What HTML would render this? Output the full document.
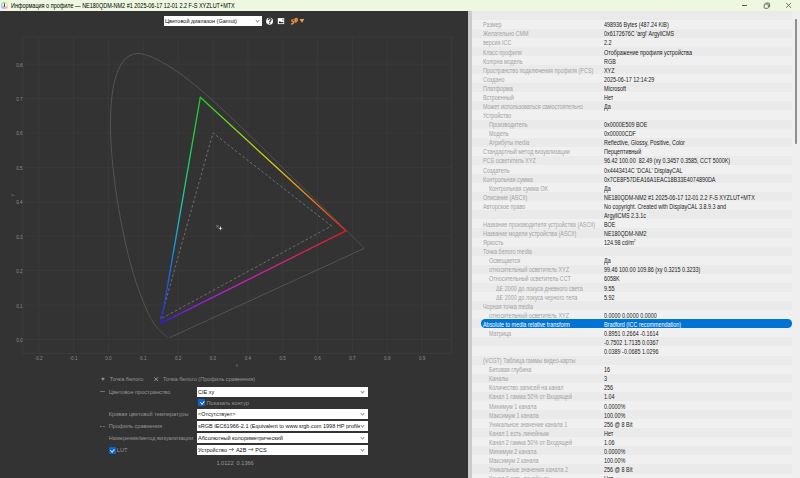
<!DOCTYPE html>
<html><head><meta charset="utf-8"><title>profile info</title>
<style>
html,body{margin:0;padding:0;width:800px;height:478px;overflow:hidden;background:#333;}
body{position:relative;font-family:"Liberation Sans",sans-serif;}
#title{position:absolute;left:0;top:0;width:800px;height:10.5px;background:#eef7e0;}
#title .txt{position:absolute;left:10.9px;top:0.5px;height:10.5px;line-height:10.5px;font-size:6.6px;color:#000;white-space:nowrap;transform:scaleX(0.832);transform-origin:0 0;}
#dark{position:absolute;left:0;top:10.5px;width:468px;height:467.5px;background:#333333;}
#split{position:absolute;left:468px;top:10.5px;width:4px;height:467.5px;background:#cbcbcb;}
#light{position:absolute;left:472px;top:10.5px;width:328px;height:467.5px;background:#efefef;overflow:hidden;}
.row{position:absolute;left:472px;width:320px;height:9.1px;}
.even{background:#f0f0f0;}
.odd{background:#eaeaea;}
.t{position:absolute;height:9.077px;line-height:9.077px;font-size:6.4px;white-space:nowrap;transform:scaleX(0.848);transform-origin:0 0;}
.lab{color:#a3a3a3;}
.val{left:603.7px;color:#1c1c1c;}
.sel{color:#fff;}
.t sup{font-size:3.5px;vertical-align:top;line-height:6px;}
.hl{position:absolute;left:481.3px;width:310.6px;height:8.5px;border-radius:4.25px;background:#0074d4;}
#scroll{position:absolute;left:795.3px;top:19.2px;width:1.3px;height:124.6px;background:#8e8e8e;border-radius:0.7px;}
.combo{position:absolute;left:196.5px;width:171px;height:10.2px;background:#fff;}
.combo .ct{position:absolute;left:1.5px;top:0.3px;line-height:10.2px;font-size:6.2px;color:#111;white-space:nowrap;overflow:hidden;width:181px;transform:scaleX(0.895);transform-origin:0 0;}
.combo .chev{position:absolute;right:3px;top:3.3px;width:2.1px;height:2.1px;border-right:0.5px solid #999;border-bottom:0.5px solid #999;transform:rotate(45deg);}
.lbl{position:absolute;font-size:5.6px;color:#949494;white-space:nowrap;line-height:8px;}
.arr{display:inline-block;transform:translateY(-1.3px) scaleY(1.1);}
.cb{position:absolute;width:7.0px;height:7.1px;background:#0e63c9;border-radius:1.2px;}
.cb:after{content:"";position:absolute;left:2.6px;top:1.5px;width:1.5px;height:2.8px;border-right:0.5px solid #d6e6f8;border-bottom:0.5px solid #d6e6f8;transform:rotate(42deg);}
</style></head><body>
<div id="title">
<div style="position:absolute;left:1.1px;top:2.0px;width:6.6px;height:6.6px;border-radius:50%;background:conic-gradient(from -10deg,#7fe37f,#d9f07a 50deg,#ffd9a0 90deg,#ffa6b8 140deg,#f09cf0 190deg,#b9a3ff 240deg,#8fd6ff 290deg,#7fe3b0 330deg,#7fe37f)"></div>
<div style="position:absolute;left:2.2px;top:3.1px;width:4.4px;height:4.4px;border-radius:50%;background:radial-gradient(circle,rgba(255,255,255,0.85) 30%,rgba(255,255,255,0.2) 100%)"></div>
<svg style="position:absolute;left:0;top:0" width="10" height="10" viewBox="0 0 10 10"><path d="M4.1 3.2 L4.75 3.2 L5.0 6.6 Q4.45 7.2 3.9 6.6 Z" fill="#2a2a2a"/></svg>
<div class="txt">Информация о профиле — NE180QDM-NM2 #1 2025-06-17 12-01 2.2 F-S XYZLUT+MTX</div>
<div style="position:absolute;left:742.2px;top:5.25px;width:5.2px;height:0.55px;background:#555"></div>
<svg style="position:absolute;left:763px;top:2px" width="8" height="8" viewBox="0 0 8 8"><rect x="1.2" y="2.1" width="4.2" height="4.2" rx="0.8" fill="none" stroke="#444" stroke-width="0.75"/><path d="M2.4 1.1 H5.6 Q6.6 1.1 6.6 2.1 V5.2" fill="none" stroke="#444" stroke-width="0.75"/></svg>
<svg style="position:absolute;left:785px;top:2px" width="7" height="7" viewBox="0 0 7 7"><path d="M1.1 0.95 L6.0 5.9 M6.0 0.95 L1.1 5.9" stroke="#444" stroke-width="0.7"/></svg>
</div>
<div id="dark"></div>
<svg class="chart" width="468" height="468" viewBox="0 10 468 468" style="position:absolute;left:0;top:10px">
<defs>
<linearGradient id="gGR" gradientUnits="userSpaceOnUse" x1="200.3" y1="97.3" x2="345.8" y2="230.8">
<stop offset="0" stop-color="#1fcc2a"/><stop offset="0.28" stop-color="#8fd81a"/><stop offset="0.52" stop-color="#e2c516"/><stop offset="0.78" stop-color="#e77a1a"/><stop offset="1" stop-color="#dd1f1f"/>
</linearGradient>
<linearGradient id="gRB" gradientUnits="userSpaceOnUse" x1="345.8" y1="230.8" x2="161.1" y2="323.2">
<stop offset="0" stop-color="#dd1f24"/><stop offset="0.35" stop-color="#d81f80"/><stop offset="0.6" stop-color="#c41fc8"/><stop offset="0.85" stop-color="#8020e0"/><stop offset="1" stop-color="#3020d8"/>
</linearGradient>
<linearGradient id="gBG" gradientUnits="userSpaceOnUse" x1="161.1" y1="323.2" x2="200.3" y2="97.3">
<stop offset="0" stop-color="#2a1ee0"/><stop offset="0.18" stop-color="#1a5ee8"/><stop offset="0.38" stop-color="#12a8dc"/><stop offset="0.52" stop-color="#12ccb0"/><stop offset="0.68" stop-color="#18d060"/><stop offset="1" stop-color="#20cc20"/>
</linearGradient>
</defs>
<g stroke="#3a3a3a" stroke-width="1">
<rect x="23" y="37" width="428.5" height="316.5" fill="none"/>
<line x1="38.68" y1="37" x2="38.68" y2="353.5"/>
<line x1="73.54" y1="37" x2="73.54" y2="353.5"/>
<line x1="108.40" y1="37" x2="108.40" y2="353.5"/>
<line x1="143.26" y1="37" x2="143.26" y2="353.5"/>
<line x1="178.12" y1="37" x2="178.12" y2="353.5"/>
<line x1="212.98" y1="37" x2="212.98" y2="353.5"/>
<line x1="247.84" y1="37" x2="247.84" y2="353.5"/>
<line x1="282.70" y1="37" x2="282.70" y2="353.5"/>
<line x1="317.56" y1="37" x2="317.56" y2="353.5"/>
<line x1="352.42" y1="37" x2="352.42" y2="353.5"/>
<line x1="387.28" y1="37" x2="387.28" y2="353.5"/>
<line x1="422.14" y1="37" x2="422.14" y2="353.5"/>
<line x1="23" y1="339.60" x2="451.5" y2="339.60"/>
<line x1="23" y1="305.16" x2="451.5" y2="305.16"/>
<line x1="23" y1="270.72" x2="451.5" y2="270.72"/>
<line x1="23" y1="236.28" x2="451.5" y2="236.28"/>
<line x1="23" y1="201.84" x2="451.5" y2="201.84"/>
<line x1="23" y1="167.40" x2="451.5" y2="167.40"/>
<line x1="23" y1="132.96" x2="451.5" y2="132.96"/>
<line x1="23" y1="98.52" x2="451.5" y2="98.52"/>
<line x1="23" y1="64.08" x2="451.5" y2="64.08"/>
</g>
<g fill="#8c8c8c" font-family="Liberation Sans, sans-serif" font-size="4.6">
<text x="38.68" y="360.1" text-anchor="middle">-0.2</text><text x="73.54" y="360.1" text-anchor="middle">-0.1</text><text x="108.40" y="360.1" text-anchor="middle">0.0</text><text x="143.26" y="360.1" text-anchor="middle">0.1</text><text x="178.12" y="360.1" text-anchor="middle">0.2</text><text x="212.98" y="360.1" text-anchor="middle">0.3</text><text x="247.84" y="360.1" text-anchor="middle">0.4</text><text x="282.70" y="360.1" text-anchor="middle">0.5</text><text x="317.56" y="360.1" text-anchor="middle">0.6</text><text x="352.42" y="360.1" text-anchor="middle">0.7</text><text x="387.28" y="360.1" text-anchor="middle">0.8</text><text x="422.14" y="360.1" text-anchor="middle">0.9</text>
<text x="22.6" y="342.10" text-anchor="end">0.0</text><text x="22.6" y="307.66" text-anchor="end">0.1</text><text x="22.6" y="273.22" text-anchor="end">0.2</text><text x="22.6" y="238.78" text-anchor="end">0.3</text><text x="22.6" y="204.34" text-anchor="end">0.4</text><text x="22.6" y="169.90" text-anchor="end">0.5</text><text x="22.6" y="135.46" text-anchor="end">0.6</text><text x="22.6" y="101.02" text-anchor="end">0.7</text><text x="22.6" y="66.58" text-anchor="end">0.8</text>
</g>
<text x="237" y="366.5" fill="#7a7a7a" font-family="Liberation Sans, sans-serif" font-size="4.6" text-anchor="middle">x</text>
<text x="0" y="0" fill="#7a7a7a" font-family="Liberation Sans, sans-serif" font-size="4.6" text-anchor="middle" transform="translate(14.3 195.4) rotate(-90)">y</text>
<path d="M169.09 337.88 L169.09 337.88 L169.08 337.88 L169.07 337.88 L169.06 337.88 L169.04 337.88 L169.02 337.90 L169.00 337.91 L168.99 337.91 L168.97 337.91 L168.95 337.91 L168.94 337.91 L168.92 337.91 L168.89 337.92 L168.87 337.93 L168.84 337.94 L168.81 337.95 L168.79 337.95 L168.76 337.95 L168.74 337.95 L168.71 337.95 L168.68 337.95 L168.64 337.95 L168.61 337.95 L168.57 337.95 L168.53 337.95 L168.49 337.95 L168.44 337.95 L168.39 337.95 L168.34 337.93 L168.29 337.91 L168.22 337.88 L168.15 337.84 L168.07 337.80 L167.97 337.74 L167.87 337.68 L167.77 337.60 L167.66 337.52 L167.54 337.43 L167.42 337.34 L167.28 337.22 L167.12 337.10 L166.95 336.96 L166.77 336.80 L166.58 336.64 L166.38 336.46 L166.17 336.27 L165.95 336.06 L165.71 335.85 L165.45 335.62 L165.18 335.38 L164.88 335.13 L164.56 334.85 L164.21 334.54 L163.83 334.22 L163.42 333.87 L162.99 333.50 L162.54 333.12 L162.07 332.71 L161.57 332.27 L161.04 331.78 L160.48 331.25 L159.88 330.69 L159.26 330.07 L158.60 329.37 L157.92 328.63 L157.21 327.85 L156.46 326.95 L155.64 325.86 L154.74 324.60 L153.78 323.18 L152.76 321.57 L151.67 319.70 L150.51 317.61 L149.29 315.31 L148.00 312.71 L146.62 309.72 L145.16 306.36 L143.62 302.66 L141.99 298.55 L140.27 293.93 L138.42 288.83 L136.46 283.28 L134.44 277.21 L132.44 270.55 L130.43 263.27 L128.40 255.41 L126.38 247.02 L124.41 238.15 L122.44 228.67 L120.48 218.61 L118.62 208.21 L116.92 197.73 L115.39 187.07 L113.98 176.14 L112.76 165.23 L111.81 154.62 L111.11 144.25 L110.64 134.03 L110.45 124.13 L110.59 114.75 L111.06 105.81 L111.84 97.26 L112.93 89.30 L114.36 82.12 L116.15 75.72 L118.29 70.00 L120.71 65.07 L123.32 61.03 L126.15 57.98 L129.24 55.85 L132.49 54.46 L135.79 53.63 L139.16 53.48 L142.64 54.04 L146.17 55.05 L149.68 56.23 L153.19 57.62 L156.71 59.32 L160.21 61.19 L163.64 63.10 L166.98 65.03 L170.26 67.04 L173.50 69.12 L176.70 71.26 L179.87 73.46 L183.00 75.73 L186.10 78.05 L189.21 80.43 L192.31 82.88 L195.40 85.39 L198.48 87.95 L201.56 90.55 L204.63 93.20 L207.70 95.90 L210.77 98.64 L213.83 101.41 L216.91 104.21 L219.98 107.05 L223.06 109.91 L226.14 112.80 L229.23 115.71 L232.34 118.66 L235.44 121.61 L238.54 124.58 L241.63 127.56 L244.73 130.56 L247.82 133.57 L250.91 136.57 L253.99 139.57 L257.08 142.58 L260.16 145.58 L263.23 148.57 L266.27 151.56 L269.31 154.54 L272.32 157.50 L275.31 160.45 L278.29 163.37 L281.24 166.28 L284.16 169.16 L287.06 172.02 L289.92 174.84 L292.76 177.63 L295.56 180.39 L298.32 183.10 L301.04 185.77 L303.72 188.40 L306.35 190.98 L308.91 193.51 L311.42 195.98 L313.88 198.41 L316.27 200.77 L318.57 203.05 L320.78 205.22 L322.91 207.32 L324.97 209.34 L326.97 211.31 L328.92 213.23 L330.81 215.09 L332.63 216.87 L334.36 218.58 L336.01 220.19 L337.58 221.72 L339.07 223.18 L340.50 224.57 L341.85 225.90 L343.13 227.16 L344.33 228.36 L345.48 229.50 L346.57 230.57 L347.58 231.57 L348.54 232.52 L349.46 233.42 L350.32 234.27 L351.13 235.06 L351.90 235.81 L352.63 236.52 L353.32 237.20 L353.97 237.84 L354.58 238.45 L355.17 239.04 L355.74 239.60 L356.29 240.14 L356.81 240.65 L357.30 241.14 L357.77 241.60 L358.22 242.04 L358.64 242.46 L359.04 242.86 L359.42 243.23 L359.78 243.57 L360.12 243.90 L360.44 244.20 L360.73 244.49 L361.00 244.75 L361.25 245.00 L361.48 245.23 L361.71 245.45 L361.91 245.66 L362.11 245.85 L362.29 246.03 L362.45 246.19 L362.61 246.35 L362.75 246.49 L362.88 246.61 L362.99 246.72 L363.09 246.82 L363.18 246.91 L363.26 246.99 L363.35 247.07 L363.43 247.15 L363.50 247.23 L363.58 247.30 L363.64 247.37 L363.70 247.43 L363.76 247.48 L363.82 247.54 L363.88 247.60 L363.94 247.66 L364.00 247.73 L364.06 247.78 L364.12 247.84 L364.17 247.89 L364.23 247.94 L364.27 247.99 L364.31 248.03 L364.35 248.07 L364.38 248.10 L364.41 248.13 L364.43 248.15 L364.45 248.17 L364.47 248.18 L364.48 248.20 L364.49 248.21 L364.50 248.22 L364.51 248.23 L364.52 248.23 Z" fill="none" stroke="#575757" stroke-width="0.9"/>
<polygon points="331.50,225.95 212.98,132.96 160.69,318.94" fill="none" stroke="#7c7c7c" stroke-width="0.8" stroke-dasharray="2.6 2.2"/>
<g stroke-width="1.3" stroke-linecap="round" fill="none">
<line x1="200.3" y1="97.3" x2="345.8" y2="230.8" stroke="url(#gGR)"/>
<line x1="345.8" y1="230.8" x2="161.1" y2="323.2" stroke="url(#gRB)"/>
<line x1="161.1" y1="323.2" x2="200.3" y2="97.3" stroke="url(#gBG)"/>
</g>
<g stroke="#9a9a9a" stroke-width="0.6">
<line x1="216.01" y1="224.89" x2="218.81" y2="227.69"/>
<line x1="216.01" y1="227.69" x2="218.81" y2="224.89"/>
</g>
<polygon points="220.47,225.86 220.97,227.76 222.87,228.26 220.97,228.75 220.47,230.66 219.98,228.75 218.07,228.26 219.98,227.76" fill="#e8e8e8"/>
</svg>
<div id="split"></div>
<div id="light"></div>
<div class="row odd" style="top:10.5px;height:9.15px"></div>
<div class="row even" style="top:19.65px"></div>
<div class="row odd" style="top:28.73px"></div>
<div class="row even" style="top:37.80px"></div>
<div class="row odd" style="top:46.88px"></div>
<div class="row even" style="top:55.96px"></div>
<div class="row odd" style="top:65.03px"></div>
<div class="row even" style="top:74.11px"></div>
<div class="row odd" style="top:83.19px"></div>
<div class="row even" style="top:92.27px"></div>
<div class="row odd" style="top:101.34px"></div>
<div class="row even" style="top:110.42px"></div>
<div class="row odd" style="top:119.50px"></div>
<div class="row even" style="top:128.57px"></div>
<div class="row odd" style="top:137.65px"></div>
<div class="row even" style="top:146.73px"></div>
<div class="row odd" style="top:155.81px"></div>
<div class="row even" style="top:164.88px"></div>
<div class="row odd" style="top:173.96px"></div>
<div class="row even" style="top:183.04px"></div>
<div class="row odd" style="top:192.11px"></div>
<div class="row even" style="top:201.19px"></div>
<div class="row odd" style="top:210.27px"></div>
<div class="row even" style="top:219.34px"></div>
<div class="row odd" style="top:228.42px"></div>
<div class="row even" style="top:237.50px"></div>
<div class="row odd" style="top:246.58px"></div>
<div class="row even" style="top:255.65px"></div>
<div class="row odd" style="top:264.73px"></div>
<div class="row even" style="top:273.81px"></div>
<div class="row odd" style="top:282.88px"></div>
<div class="row even" style="top:291.96px"></div>
<div class="row odd" style="top:301.04px"></div>
<div class="row even" style="top:310.11px"></div>
<div class="row odd" style="top:319.19px"></div>
<div class="row even" style="top:328.27px"></div>
<div class="row odd" style="top:337.34px"></div>
<div class="row even" style="top:346.42px"></div>
<div class="row odd" style="top:355.50px"></div>
<div class="row even" style="top:364.58px"></div>
<div class="row odd" style="top:373.65px"></div>
<div class="row even" style="top:382.73px"></div>
<div class="row odd" style="top:391.81px"></div>
<div class="row even" style="top:400.88px"></div>
<div class="row odd" style="top:409.96px"></div>
<div class="row even" style="top:419.04px"></div>
<div class="row odd" style="top:428.11px"></div>
<div class="row even" style="top:437.19px"></div>
<div class="row odd" style="top:446.27px"></div>
<div class="row even" style="top:455.35px"></div>
<div class="row odd" style="top:464.42px"></div>
<div class="row even" style="top:473.50px"></div>
<div class="t lab" style="top:20.30px;left:483.0px">Размер</div>
<div class="t val" style="top:20.30px">498936 Bytes (487.24 KiB)</div>
<div class="t lab" style="top:29.38px;left:483.0px">Желательно CMM</div>
<div class="t val" style="top:29.38px">0x6172676C 'argl' ArgyllCMS</div>
<div class="t lab" style="top:38.45px;left:483.0px">версия ICC</div>
<div class="t val" style="top:38.45px">2.2</div>
<div class="t lab" style="top:47.53px;left:483.0px">Класс профиля</div>
<div class="t val" style="top:47.53px">Отображение профиля устройства</div>
<div class="t lab" style="top:56.61px;left:483.0px">Колірна модель</div>
<div class="t val" style="top:56.61px">RGB</div>
<div class="t lab" style="top:65.69px;left:483.0px">Пространство подключения профиля (PCS)</div>
<div class="t val" style="top:65.69px">XYZ</div>
<div class="t lab" style="top:74.76px;left:483.0px">Создано</div>
<div class="t val" style="top:74.76px">2025-06-17 12:14:29</div>
<div class="t lab" style="top:83.84px;left:483.0px">Платформа</div>
<div class="t val" style="top:83.84px">Microsoft</div>
<div class="t lab" style="top:92.92px;left:483.0px">Встроенный</div>
<div class="t val" style="top:92.92px">Нет</div>
<div class="t lab" style="top:101.99px;left:483.0px">Может использоваться самостоятельно</div>
<div class="t val" style="top:101.99px">Да</div>
<div class="t lab" style="top:111.07px;left:483.0px">Устройство</div>
<div class="t lab" style="top:120.15px;left:488.9px">Производитель</div>
<div class="t val" style="top:120.15px">0x0000E509 BOE</div>
<div class="t lab" style="top:129.22px;left:488.9px">Модель</div>
<div class="t val" style="top:129.22px">0x00000CDF</div>
<div class="t lab" style="top:138.30px;left:488.9px">Атрибуты media</div>
<div class="t val" style="top:138.30px">Reflective, Glossy, Positive, Color</div>
<div class="t lab" style="top:147.38px;left:483.0px">Стандартный метод визуализации</div>
<div class="t val" style="top:147.38px">Перцептивный</div>
<div class="t lab" style="top:156.46px;left:483.0px">PCS осветитель XYZ</div>
<div class="t val" style="top:156.46px">96.42 100.00 &nbsp;82.49 (xy 0.3457 0.3585, CCT 5000K)</div>
<div class="t lab" style="top:165.53px;left:483.0px">Создатель</div>
<div class="t val" style="top:165.53px">0x4443414C 'DCAL' DisplayCAL</div>
<div class="t lab" style="top:174.61px;left:483.0px">Контрольная сумма</div>
<div class="t val" style="top:174.61px">0x7CE8F57DEA16A1EAC18B33E4074890DA</div>
<div class="t lab" style="top:183.69px;left:488.9px">Контрольная сумма OK</div>
<div class="t val" style="top:183.69px">Да</div>
<div class="t lab" style="top:192.76px;left:483.0px">Описание (ASCII)</div>
<div class="t val" style="top:192.76px">NE180QDM-NM2 #1 2025-06-17 12-01 2.2 F-S XYZLUT+MTX</div>
<div class="t lab" style="top:201.84px;left:483.0px">Авторское право</div>
<div class="t val" style="top:201.84px">No copyright. Created with DisplayCAL 3.8.9.3 and</div>
<div class="t val" style="top:210.92px">ArgyllCMS 2.3.1c</div>
<div class="t lab" style="top:219.99px;left:483.0px">Название производителя устройства (ASCII)</div>
<div class="t val" style="top:219.99px">BOE</div>
<div class="t lab" style="top:229.07px;left:483.0px">Название модели устройства (ASCII)</div>
<div class="t val" style="top:229.07px">NE180QDM-NM2</div>
<div class="t lab" style="top:238.15px;left:483.0px">Яркость</div>
<div class="t val" style="top:238.15px">124.98 cd/m<sup>2</sup></div>
<div class="t lab" style="top:247.23px;left:483.0px">Точка белого media</div>
<div class="t lab" style="top:256.30px;left:488.9px">Освещается</div>
<div class="t val" style="top:256.30px">Да</div>
<div class="t lab" style="top:265.38px;left:488.9px">относительный осветитель XYZ</div>
<div class="t val" style="top:265.38px">99.46 100.00 109.86 (xy 0.3215 0.3233)</div>
<div class="t lab" style="top:274.46px;left:488.9px">Относительный осветитель CCT</div>
<div class="t val" style="top:274.46px">6058K</div>
<div class="t lab" style="top:283.53px;left:496.1px">ΔE 2000 до локуса дневного света</div>
<div class="t val" style="top:283.53px">9.55</div>
<div class="t lab" style="top:292.61px;left:496.1px">ΔE 2000 до локуса черного тела</div>
<div class="t val" style="top:292.61px">5.92</div>
<div class="t lab" style="top:301.69px;left:483.0px">Чорная точка media</div>
<div class="t lab" style="top:310.76px;left:488.9px">относительный осветитель XYZ</div>
<div class="t val" style="top:310.76px">0.0000 0.0000 0.0000</div>
<div class="hl" style="top:319.39px"></div>
<div class="t lab sel" style="top:319.84px;left:483.0px">Absolute to media relative transform</div>
<div class="t val sel" style="top:319.84px">Bradford (ICC recommendation)</div>
<div class="t lab" style="top:328.92px;left:488.9px">Матрица</div>
<div class="t val" style="top:328.92px">0.8951 0.2664 -0.1614</div>
<div class="t val" style="top:337.99px">-0.7502 1.7135 0.0367</div>
<div class="t val" style="top:347.07px">0.0389 -0.0685 1.0296</div>
<div class="t lab" style="top:356.15px;left:483.0px">(VCGT) Таблица гаммы видео-карты</div>
<div class="t lab" style="top:365.23px;left:488.9px">Битовая глубина</div>
<div class="t val" style="top:365.23px">16</div>
<div class="t lab" style="top:374.30px;left:488.9px">Каналы</div>
<div class="t val" style="top:374.30px">3</div>
<div class="t lab" style="top:383.38px;left:488.9px">Количество записей на канал</div>
<div class="t val" style="top:383.38px">256</div>
<div class="t lab" style="top:392.46px;left:488.9px">Канал 1 гамма 50% от Входящей</div>
<div class="t val" style="top:392.46px">1.04</div>
<div class="t lab" style="top:401.53px;left:488.9px">Минимум 1 канала</div>
<div class="t val" style="top:401.53px">0.0000%</div>
<div class="t lab" style="top:410.61px;left:488.9px">Максимум 1 канала</div>
<div class="t val" style="top:410.61px">100.00%</div>
<div class="t lab" style="top:419.69px;left:488.9px">Уникальное значение канала 1</div>
<div class="t val" style="top:419.69px">256 @ 8 Bit</div>
<div class="t lab" style="top:428.76px;left:488.9px">Канал 1 есть линейным</div>
<div class="t val" style="top:428.76px">Нет</div>
<div class="t lab" style="top:437.84px;left:488.9px">Канал 2 гамма 50% от Входящей</div>
<div class="t val" style="top:437.84px">1.06</div>
<div class="t lab" style="top:446.92px;left:488.9px">Минимум 2 канала</div>
<div class="t val" style="top:446.92px">0.0000%</div>
<div class="t lab" style="top:456.00px;left:488.9px">Максимум 2 канала</div>
<div class="t val" style="top:456.00px">100.00%</div>
<div class="t lab" style="top:465.07px;left:488.9px">Уникальные значения канала 2</div>
<div class="t val" style="top:465.07px">256 @ 8 Bit</div>
<div class="t lab" style="top:474.15px;left:488.9px">Канал 2 есть линейным</div>
<div class="t val" style="top:474.15px">Нет</div>
<div id="scroll"></div>
<!-- toolbar -->
<div class="combo" style="left:163.8px;top:16.2px;width:98.2px;height:10.1px"><div class="ct" style="left:1.6px;line-height:10.1px;width:100px">Цветовой диапазон (Gamut)</div><div class="chev" style="right:3.2px;top:3.1px"></div></div>
<svg style="position:absolute;left:260px;top:14px" width="50" height="16" viewBox="260 14 50 16">
<circle cx="269.6" cy="21.3" r="3.45" fill="#fff"/>
<path d="M268.2 20.0 Q268.3 18.4 269.7 18.4 Q271.2 18.5 271.1 19.9 Q271.0 20.9 270.2 21.3 Q269.7 21.6 269.7 22.4" fill="none" stroke="#1e1e1e" stroke-width="1.05"/>
<circle cx="269.7" cy="23.55" r="0.55" fill="#1e1e1e"/>
<rect x="277.8" y="18.1" width="6.4" height="6.0" fill="#fff"/>
<path d="M278.6 23.3 L279.3 21.6 Q279.7 21.0 280.3 21.6 L281.2 22.3 L283.4 22.1 L283.4 23.3 Z" fill="#1e1e1e"/>
<rect x="282.6" y="18.9" width="0.7" height="1.5" fill="#1e1e1e"/>
<path d="M294.6 18.4 Q296.6 17.2 297.9 18.6 Q298.6 20.4 297.0 22.0 Q295.6 23.2 294.6 22.2 Q293.9 21.0 294.6 18.4 Z" fill="#e9903f"/>
<path d="M295.6 19.2 Q296.6 18.6 296.9 19.6 Q296.8 20.8 295.9 21.4" fill="none" stroke="#9a5a2a" stroke-width="0.5"/>
<path d="M293.8 19.0 Q291.2 19.0 290.9 20.6 Q291.0 21.7 292.7 21.9 Q293.3 22.4 292.0 23.0 Q290.6 23.4 290.5 24.3 Q291.6 25.2 293.2 24.3 Q295.0 23.2 294.4 21.6 Q294.0 21.0 292.6 20.8 Q292.6 20.1 293.8 20.0 Z" fill="#ec8b3a"/>
<path d="M299.6 18.9 L304.3 18.9 L302.4 22.2 Q301.95 22.7 301.5 22.2 Z" fill="#f0a048"/>
</svg>
<!-- bottom controls -->
<svg style="position:absolute;left:99px;top:375px" width="8" height="8" viewBox="0 0 8 8"><polygon points="3.95,1.65 4.34,3.56 6.25,3.95 4.34,4.34 3.95,6.25 3.56,4.34 1.65,3.95 3.56,3.56" fill="#d4d4d4"/></svg>
<div class="lbl" style="left:109.7px;top:375px">Точка белого</div>
<svg style="position:absolute;left:153px;top:376px" width="7" height="7" viewBox="0 0 7 7"><path d="M1.3 1.3 L5.1 5.1 M5.1 1.3 L1.3 5.1" stroke="#bbb" stroke-width="0.7"/></svg>
<div class="lbl" style="left:163.1px;top:375px">Точка белого (Профиль сравнения)</div>
<div style="position:absolute;left:100.0px;top:391.2px;width:5.2px;height:0.55px;background:#707070"></div>
<div class="lbl" style="left:108.8px;top:388.2px">Цветовое пространство</div>
<div class="combo" style="top:386.7px"><div class="ct">CIE xy</div><div class="chev"></div></div>
<div class="cb" style="left:198.1px;top:398.9px"></div>
<div class="lbl" style="left:206.5px;top:398.7px">Показать контур</div>
<div class="lbl" style="left:108.8px;top:409.8px">Кривая цветовой температуры</div>
<div class="combo" style="top:408.8px"><div class="ct">&lt;Отсутствует&gt;</div><div class="chev"></div></div>
<div style="position:absolute;left:100.2px;top:425.5px;width:1.6px;height:0.55px;background:#707070"></div>
<div style="position:absolute;left:103.4px;top:425.5px;width:1.6px;height:0.55px;background:#707070"></div>
<div class="lbl" style="left:108.8px;top:421.9px">Профиль сравнения</div>
<div class="combo" style="top:420.8px"><div class="ct">sRGB IEC61966-2.1 (Equivalent to www.srgb.com 1998 HP profile)</div><div class="chev"></div></div>
<div class="lbl" style="left:108.8px;top:434.4px">Намерение/метод визуализации</div>
<div class="combo" style="top:432.9px"><div class="ct">Абсолютный колориметрический</div><div class="chev"></div></div>
<div class="cb" style="left:108.9px;top:446.8px"></div>
<div class="lbl" style="left:116.8px;top:446px">LUT</div>
<div class="combo" style="top:445.2px"><div class="ct">Устройство <svg width="6.2" height="5" viewBox="0 0 6.2 5" style="vertical-align:0px;margin:0 0.2px"><path d="M0.4 2.5 H5.6 M3.9 0.9 L5.6 2.5 L3.9 4.1" stroke="#333" stroke-width="0.6" fill="none"/></svg> A2B <svg width="6.2" height="5" viewBox="0 0 6.2 5" style="vertical-align:0px;margin:0 0.2px"><path d="M0.4 2.5 H5.6 M3.9 0.9 L5.6 2.5 L3.9 4.1" stroke="#333" stroke-width="0.6" fill="none"/></svg> PCS</div><div class="chev"></div></div>
<div class="lbl" style="left:216.4px;top:459.4px;color:#9a9a9a">1.0122 &nbsp;0.1366</div>
</body></html>
